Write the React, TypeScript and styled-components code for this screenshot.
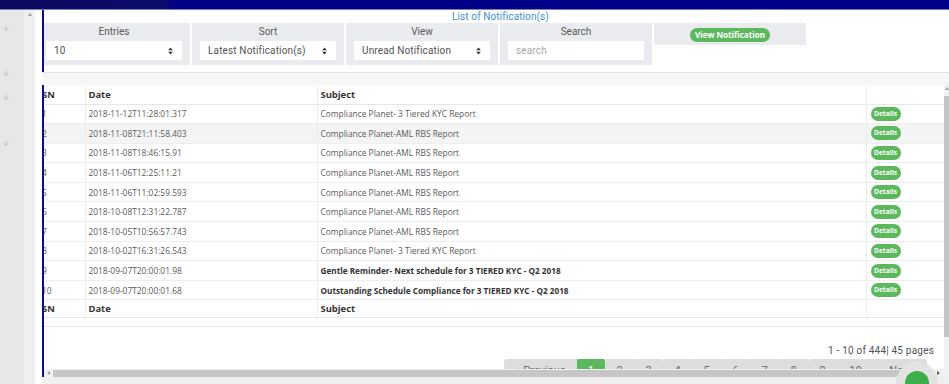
import styled, { createGlobalStyle } from 'styled-components';
import { ArrowDown } from 'lucide-react';

const GlobalStyle = createGlobalStyle`
  html, body {
    margin: 0;
    padding: 0;
    background: #fff;
    overflow: hidden;
  }
  * { box-sizing: border-box; }
`;

const NAVY = '#0b0b86';
const GREEN = '#5cb85c';

const Page = styled.div`
  width: 949px;
  height: 384px;
  display: flex;
  flex-direction: column;
  font-family: Roboto, 'Liberation Sans', sans-serif;
  color: #555;
  position: relative;
  overflow: hidden;
`;

const TopBar = styled.div`
  height: 10px;
  flex: none;
  background: linear-gradient(to right, #0b0b5e 0, #0c0c6c 160px, #010187 178px, #01018a 100%);
  border-bottom: 1px solid #7c7cb6;
`;

const Body = styled.div`
  flex: 1;
  display: flex;
  min-height: 0;
`;

const SideNav = styled.div`
  width: 24px;
  flex: none;
  background: #e7e7e7;
  display: flex;
  flex-direction: column;
  padding: 14px 0 0 2px;
  color: #a9a9a9;
`;

const SideArrow = styled.div<{ $gap: number }>`
  height: 8px;
  margin-top: ${(p) => p.$gap}px;
  display: flex;
`;

const SideRail = styled.div`
  width: 11px;
  flex: none;
  background: #efefef;
  display: flex;
  justify-content: center;
  padding-top: 3px;
`;

const RailArrow = styled.div`
  width: 0;
  height: 0;
  border-left: 2px solid transparent;
  border-right: 2px solid transparent;
  border-bottom: 3px solid #9a9a9a;
`;

const Gutter = styled.div`
  width: 7px;
  flex: none;
  background: #fff;
`;

const Main = styled.div`
  flex: 1;
  min-width: 0;
  display: flex;
  flex-direction: column;
  overflow: hidden;
`;

const FilterSection = styled.section`
  height: 62px;
  flex: none;
  border-left: 2px solid ${NAVY};
  overflow: hidden;
`;

const Shift = styled.div<{ $by: number; $w: number }>`
  margin-left: -${(p) => p.$by}px;
  width: ${(p) => p.$w}px;
`;

const Title = styled.h4`
  margin: 0;
  height: 13px;
  padding-left: 14px;
  text-align: center;
  font-size: 10px;
  line-height: 14px;
  font-weight: 400;
  color: #3d8fd6;
  letter-spacing: 0.1px;
`;

const FilterRow = styled.div`
  display: flex;
  align-items: flex-start;
  gap: 2px;
`;

const FilterCol = styled.div<{ $short?: boolean }>`
  width: 152px;
  height: ${(p) => (p.$short ? 22 : 42)}px;
  background: #e9ebee;
  padding: ${(p) => (p.$short ? '5px 0 0' : '3px 0 0')};
  display: flex;
  flex-direction: column;
  align-items: center;
`;

const FilterLabel = styled.label`
  font-size: 10px;
  line-height: 12px;
  color: #5a5a5a;
`;

const SelectBox = styled.div<{ $placeholder?: boolean }>`
  margin-top: 3px;
  width: 136px;
  height: 19px;
  background: #fff;
  display: flex;
  align-items: center;
  justify-content: space-between;
  padding: 0 9px 0 8px;
  font-size: 10px;
  color: ${(p) => (p.$placeholder ? '#a9a9a9' : '#555')};
  letter-spacing: 0.15px;
`;

const GreenPill = styled.button`
  height: 14px;
  width: 80px;
  border: none;
  border-radius: 7px;
  background: ${GREEN};
  color: #fff;
  font-family: 'Open Sans', sans-serif;
  font-weight: 700;
  font-size: 8.1px;
  padding: 0;
  line-height: 14px;
`;

const Divider = styled.div`
  height: 13px;
  flex: none;
  border-top: 1px solid #e3e3e3;
  background: #f6f6f6;
`;

const TableSection = styled.section`
  flex: 1;
  min-height: 0;
  display: flex;
  border-left: 2px solid ${NAVY};
`;

const CardMain = styled.div`
  flex: 1;
  min-width: 0;
  display: flex;
  flex-direction: column;
`;

const ScrollView = styled.div`
  height: 284px;
  overflow: hidden;
`;

const Table = styled.table`
  width: 905px;
  border-collapse: collapse;
  table-layout: fixed;
  font-family: 'Open Sans', sans-serif;
`;

const Th = styled.th<{ $h: number }>`
  height: ${(p) => p.$h}px;
  padding: 0 3px;
  text-align: left;
  font-size: 9.4px;
  font-weight: 700;
  color: #333;
  border-right: 1px solid #ececec;
  border-bottom: 1px solid #e6e6e6;
  white-space: nowrap;
  overflow: hidden;
`;

const Tr = styled.tr<{ $shade?: boolean }>`
  background: ${(p) => (p.$shade ? '#f4f4f4' : '#fff')};
`;

const Td = styled.td<{ $bold?: boolean }>`
  height: 19.6px;
  padding: 0 3px;
  font-size: ${(p) => (p.$bold ? 8.2 : 8.4)}px;
  font-weight: ${(p) => (p.$bold ? 700 : 400)};
  color: ${(p) => (p.$bold ? '#333' : '#5a5a5a')};
  border-right: 1px solid #ececec;
  border-bottom: 1px solid #eeeeee;
  white-space: nowrap;
  overflow: hidden;
`;

const DetailsBtn = styled.span`
  display: inline-block;
  width: 30px;
  height: 14px;
  border-radius: 7px;
  background: ${GREEN};
  color: #fff;
  font-size: 6.6px;
  font-weight: 700;
  line-height: 14px;
  text-align: center;
  vertical-align: middle;
  margin-left: 1px;
`;

const TableEnd = styled.div`
  height: 9px;
  border-bottom: 1px solid #e6e6e6;
`;

const PageInfo = styled.div`
  margin-top: 18px;
  padding-right: 10px;
  text-align: right;
  font-size: 10px;
  line-height: 12px;
  color: #555;
  letter-spacing: 0.2px;
`;

const PagerRow = styled.div`
  margin-top: 2px;
  display: flex;
  justify-content: flex-end;
  padding-right: 17px;
`;

const PagerBar = styled.div`
  display: flex;
  background: #dddddd;
  border-radius: 3px 3px 0 0;
  overflow: hidden;
`;

const PageItem = styled.div<{ $w: number; $active?: boolean }>`
  width: ${(p) => p.$w}px;
  height: 22px;
  padding-top: 5px;
  text-align: center;
  font-size: 11px;
  line-height: 13px;
  color: ${(p) => (p.$active ? '#fff' : '#666')};
  background: ${(p) => (p.$active ? GREEN : 'transparent')};
  border-radius: ${(p) => (p.$active ? '2px 2px 0 0' : '0')};
  position: relative;
  &::before {
    content: '';
    position: absolute;
    left: 0;
    top: 0;
    width: 1px;
    height: 2px;
    background: ${(p) => (p.$active ? 'transparent' : '#fff')};
  }
  &:first-child::before {
    display: none;
  }
`;

const HScroll = styled.div`
  height: 8px;
  flex: none;
  display: flex;
  align-items: center;
  background: #f1f1f1;
  padding: 0 4px 0 3px;
  gap: 3px;
`;

const HThumb = styled.div`
  flex: 1;
  height: 7px;
  background: #c6c6c6;
`;

const ScrollArrow = styled.div<{ $dir: 'left' | 'right' | 'up' | 'down' }>`
  width: 0;
  height: 0;
  flex: none;
  ${(p) =>
    p.$dir === 'left'
      ? 'border-top: 2px solid transparent; border-bottom: 2px solid transparent; border-right: 3px solid #9a9a9a;'
      : p.$dir === 'right'
      ? 'border-top: 2.5px solid transparent; border-bottom: 2.5px solid transparent; border-left: 3px solid #555;'
      : p.$dir === 'up'
      ? 'border-left: 2px solid transparent; border-right: 2px solid transparent; border-bottom: 3px solid #a0a0a0;'
      : 'border-left: 2px solid transparent; border-right: 2px solid transparent; border-top: 3px solid #a0a0a0;'}
`;

const VScroll = styled.div`
  width: 5px;
  flex: none;
  background: #f1f1f1;
  display: flex;
  flex-direction: column;
  align-items: center;
  padding: 2px 0 12px;
`;

const VThumb = styled.div`
  width: 5px;
  height: 241px;
  margin-top: 6px;
  background: #c3c3c3;
`;

const Footer = styled.div`
  height: 7px;
  flex: none;
  background: #efefef;
`;

const ChatBubble = styled.div`
  position: absolute;
  left: 896px;
  top: 362px;
  width: 42px;
  height: 42px;
  border-radius: 50%;
  background: #e3e3e3;
  display: flex;
  align-items: center;
  justify-content: center;
  &::after {
    content: '';
    width: 24px;
    height: 24px;
    border-radius: 50%;
    background: #3cae4a;
  }
`;

function UpDown() {
  return (
    <svg width="5" height="8" viewBox="0 0 5 8">
      <path d="M2.5 0.5 L4.8 3.3 H0.2 Z M2.5 7.5 L4.8 4.7 H0.2 Z" fill="#333" />
    </svg>
  );
}

type Row = { sn: number; date: string; subject: string; unread?: boolean };

const rows: Row[] = [
  { sn: 1, date: '2018-11-12T11:28:01.317', subject: 'Compliance Planet- 3 Tiered KYC Report' },
  { sn: 2, date: '2018-11-08T21:11:58.403', subject: 'Compliance Planet-AML RBS Report' },
  { sn: 3, date: '2018-11-08T18:46:15.91', subject: 'Compliance Planet-AML RBS Report' },
  { sn: 4, date: '2018-11-06T12:25:11.21', subject: 'Compliance Planet-AML RBS Report' },
  { sn: 5, date: '2018-11-06T11:02:59.593', subject: 'Compliance Planet-AML RBS Report' },
  { sn: 6, date: '2018-10-08T12:31:22.787', subject: 'Compliance Planet-AML RBS Report' },
  { sn: 7, date: '2018-10-05T10:56:57.743', subject: 'Compliance Planet-AML RBS Report' },
  { sn: 8, date: '2018-10-02T16:31:26.543', subject: 'Compliance Planet- 3 Tiered KYC Report' },
  { sn: 9, date: '2018-09-07T20:00:01.98', subject: 'Gentle Reminder- Next schedule for 3 TIERED KYC - Q2 2018', unread: true },
  { sn: 10, date: '2018-09-07T20:00:01.68', subject: 'Outstanding Schedule Compliance for 3 TIERED KYC - Q2 2018', unread: true },
];

const pages: { label: string; w: number; active?: boolean }[] = [
  { label: '« Previous', w: 73 },
  { label: '1', w: 28, active: true },
  { label: '2', w: 29 },
  { label: '3', w: 29 },
  { label: '4', w: 29 },
  { label: '5', w: 29 },
  { label: '6', w: 29 },
  { label: '7', w: 29 },
  { label: '8', w: 29 },
  { label: '9', w: 29 },
  { label: '10', w: 37 },
  { label: 'Next', w: 53 },
];

function HeadRow({ h }: { h: number }) {
  return (
    <tr>
      <Th $h={h}>SN</Th>
      <Th $h={h}>Date</Th>
      <Th $h={h}>Subject</Th>
      <Th $h={h}></Th>
    </tr>
  );
}

export default function App() {
  return (
    <Page>
      <GlobalStyle />
      <TopBar />
      <Body>
        <SideNav>
          {[0, 37, 16, 38].map((g, i) => (
            <SideArrow key={i} $gap={g}>
              <ArrowDown size={8} strokeWidth={1.6} />
            </SideArrow>
          ))}
        </SideNav>
        <SideRail>
          <RailArrow />
        </SideRail>
        <Gutter />
        <Main>
          <FilterSection>
            <Shift $by={6} $w={911}>
              <Title>List of Notification(s)</Title>
              <FilterRow>
                <FilterCol>
                  <FilterLabel>Entries</FilterLabel>
                  <SelectBox>
                    10 <UpDown />
                  </SelectBox>
                </FilterCol>
                <FilterCol>
                  <FilterLabel>Sort</FilterLabel>
                  <SelectBox>
                    Latest Notification(s) <UpDown />
                  </SelectBox>
                </FilterCol>
                <FilterCol>
                  <FilterLabel>View</FilterLabel>
                  <SelectBox>
                    Unread Notification <UpDown />
                  </SelectBox>
                </FilterCol>
                <FilterCol>
                  <FilterLabel>Search</FilterLabel>
                  <SelectBox $placeholder>search</SelectBox>
                </FilterCol>
                <FilterCol $short>
                  <GreenPill>View Notification</GreenPill>
                </FilterCol>
              </FilterRow>
            </Shift>
          </FilterSection>
          <Divider />
          <TableSection>
            <CardMain>
              <ScrollView>
                <Shift $by={5} $w={905}>
                  <Table>
                    <colgroup>
                      <col style={{ width: 46 }} />
                      <col style={{ width: 232 }} />
                      <col style={{ width: 549 }} />
                      <col style={{ width: 78 }} />
                    </colgroup>
                    <thead>
                      <HeadRow h={19} />
                    </thead>
                    <tbody>
                      {rows.map((r) => (
                        <Tr key={r.sn} $shade={r.sn === 2}>
                          <Td>{r.sn}</Td>
                          <Td>{r.date}</Td>
                          <Td $bold={r.unread}>{r.subject}</Td>
                          <Td>
                            <DetailsBtn>Details</DetailsBtn>
                          </Td>
                        </Tr>
                      ))}
                    </tbody>
                    <tfoot>
                      <HeadRow h={18} />
                    </tfoot>
                  </Table>
                  <TableEnd />
                  <PageInfo>1 - 10 of 444| 45 pages</PageInfo>
                  <PagerRow>
                    <PagerBar>
                      {pages.map((p) => (
                        <PageItem key={p.label} $w={p.w} $active={p.active}>
                          {p.label}
                        </PageItem>
                      ))}
                    </PagerBar>
                  </PagerRow>
                </Shift>
              </ScrollView>
              <HScroll>
                <ScrollArrow $dir="left" />
                <HThumb />
                <ScrollArrow $dir="right" />
              </HScroll>
            </CardMain>
            <VScroll>
              <ScrollArrow $dir="up" />
              <VThumb />
            </VScroll>
          </TableSection>
          <Footer />
        </Main>
      </Body>
      <ChatBubble />
    </Page>
  );
}
